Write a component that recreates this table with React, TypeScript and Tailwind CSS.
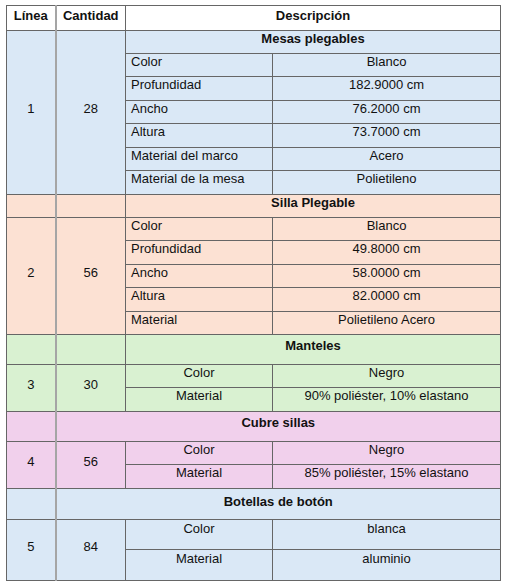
import React from 'react';

type Section = {
  linea: number;
  cantidad: number;
  title: string;
  // 'all' = Línea/Cantidad span the title row too, 'desc' = title spans desc cols, 'wide' = title spans Cantidad + desc
  titleMode: 'all' | 'desc' | 'wide';
  labelAlign: 'left' | 'center';
  bg: string;
  titleH: string;
  titlePt: string;
  rowPt: string;
  rowHs: string[];
  rows: [string, string][];
};

const sections: Section[] = [
  {
    linea: 1,
    cantidad: 28,
    title: 'Mesas plegables',
    titleMode: 'all',
    labelAlign: 'left',
    bg: 'bg-[#dae8f6]',
    titleH: 'h-[23px]',
    titlePt: 'pt-0',
    rowPt: 'pt-0',
    rowHs: ['h-[23px]', 'h-[24px]', 'h-[23px]', 'h-[24px]', 'h-[23px]', 'h-[24px]'],
    rows: [
      ['Color', 'Blanco'],
      ['Profundidad', '182.9000 cm'],
      ['Ancho', '76.2000 cm'],
      ['Altura', '73.7000 cm'],
      ['Material del marco', 'Acero'],
      ['Material de la mesa', 'Polietileno'],
    ],
  },
  {
    linea: 2,
    cantidad: 56,
    title: 'Silla Plegable',
    titleMode: 'desc',
    labelAlign: 'left',
    bg: 'bg-[#fce1d3]',
    titleH: 'h-[23px]',
    titlePt: 'pt-0',
    rowPt: 'pt-0',
    rowHs: ['h-[23px]', 'h-[24px]', 'h-[23px]', 'h-[24px]', 'h-[23px]'],
    rows: [
      ['Color', 'Blanco'],
      ['Profundidad', '49.8000 cm'],
      ['Ancho', '58.0000 cm'],
      ['Altura', '82.0000 cm'],
      ['Material', 'Polietileno Acero'],
    ],
  },
  {
    linea: 3,
    cantidad: 30,
    title: 'Manteles',
    titleMode: 'desc',
    labelAlign: 'center',
    bg: 'bg-[#d9f1d1]',
    titleH: 'h-[30px]',
    titlePt: 'pt-[3px]',
    rowPt: 'pt-0',
    rowHs: ['h-[23px]', 'h-[24px]'],
    rows: [
      ['Color', 'Negro'],
      ['Material', '90% poliéster, 10% elastano'],
    ],
  },
  {
    linea: 4,
    cantidad: 56,
    title: 'Cubre sillas',
    titleMode: 'wide',
    labelAlign: 'center',
    bg: 'bg-[#f1d0ec]',
    titleH: 'h-[30px]',
    titlePt: 'pt-[3px]',
    rowPt: 'pt-0',
    rowHs: ['h-[23px]', 'h-[24px]'],
    rows: [
      ['Color', 'Negro'],
      ['Material', '85% poliéster, 15% elastano'],
    ],
  },
  {
    linea: 5,
    cantidad: 84,
    title: 'Botellas de botón',
    titleMode: 'wide',
    labelAlign: 'center',
    bg: 'bg-[#dae8f6]',
    titleH: 'h-[31px]',
    titlePt: 'pt-[5px]',
    rowPt: 'pt-[1px]',
    rowHs: ['h-[30px]', 'h-[31px]'],
    rows: [
      ['Color', 'blanca'],
      ['Material', 'aluminio'],
    ],
  },
];

const cell = 'border border-[#666666] p-0 align-top';
const firstCol = 'border border-[#666666] border-r-2 border-r-[#a5a5a5] p-0';

const SectionRows = ({ s }: { s: Section }) => {
  const labelCls = s.labelAlign === 'left' ? 'text-left pl-[5px]' : 'text-center';
  const span = s.titleMode === 'all' ? s.rows.length + 1 : s.rows.length;

  const numCells = (
    <>
      <td rowSpan={span} className={`${firstCol} text-center align-middle pb-[7px]`}>
        {s.linea}
      </td>
      <td rowSpan={span} className={`${cell} text-center !align-middle pb-[7px]`}>
        {s.cantidad}
      </td>
    </>
  );

  return (
    <>
      <tr className={`${s.bg} ${s.titleH}`}>
        {s.titleMode === 'all' && numCells}
        {s.titleMode === 'desc' && (
          <>
            <td className={firstCol} />
            <td className={cell} />
          </>
        )}
        {s.titleMode === 'wide' && <td className={firstCol} />}
        <td
          colSpan={s.titleMode === 'wide' ? 3 : 2}
          className={`${cell} text-center font-bold ${s.titlePt}`}
        >
          {s.title}
        </td>
      </tr>
      {s.rows.map(([label, value], i) => (
        <tr key={label} className={`${s.bg} ${s.rowHs[i]}`}>
          {i === 0 && s.titleMode !== 'all' && numCells}
          <td className={`${cell} ${labelCls} ${s.rowPt}`}>{label}</td>
          <td className={`${cell} text-center ${s.rowPt}`}>{value}</td>
        </tr>
      ))}
    </>
  );
};

export default function App() {
  return (
    <div className="min-h-[587px] bg-white pl-[6px] pt-[5px] text-[13px] leading-[16px] text-[#111111] [font-family:'Liberation_Sans',Arial,sans-serif]">
      <table className="w-[494px] table-fixed border-collapse">
        <colgroup>
          <col className="w-[49px]" />
          <col className="w-[70px]" />
          <col className="w-[147px]" />
          <col className="w-[228px]" />
        </colgroup>
        <thead>
          <tr className="h-[25px] bg-white font-bold">
            <th className={`${firstCol} text-center align-top pt-[2px]`}>Línea</th>
            <th className={`${cell} text-center pt-[2px]`}>Cantidad</th>
            <th colSpan={2} className={`${cell} text-center pt-[2px]`}>
              Descripción
            </th>
          </tr>
        </thead>
        <tbody>
          {sections.map((s) => (
            <SectionRows key={s.linea} s={s} />
          ))}
        </tbody>
      </table>
    </div>
  );
}
